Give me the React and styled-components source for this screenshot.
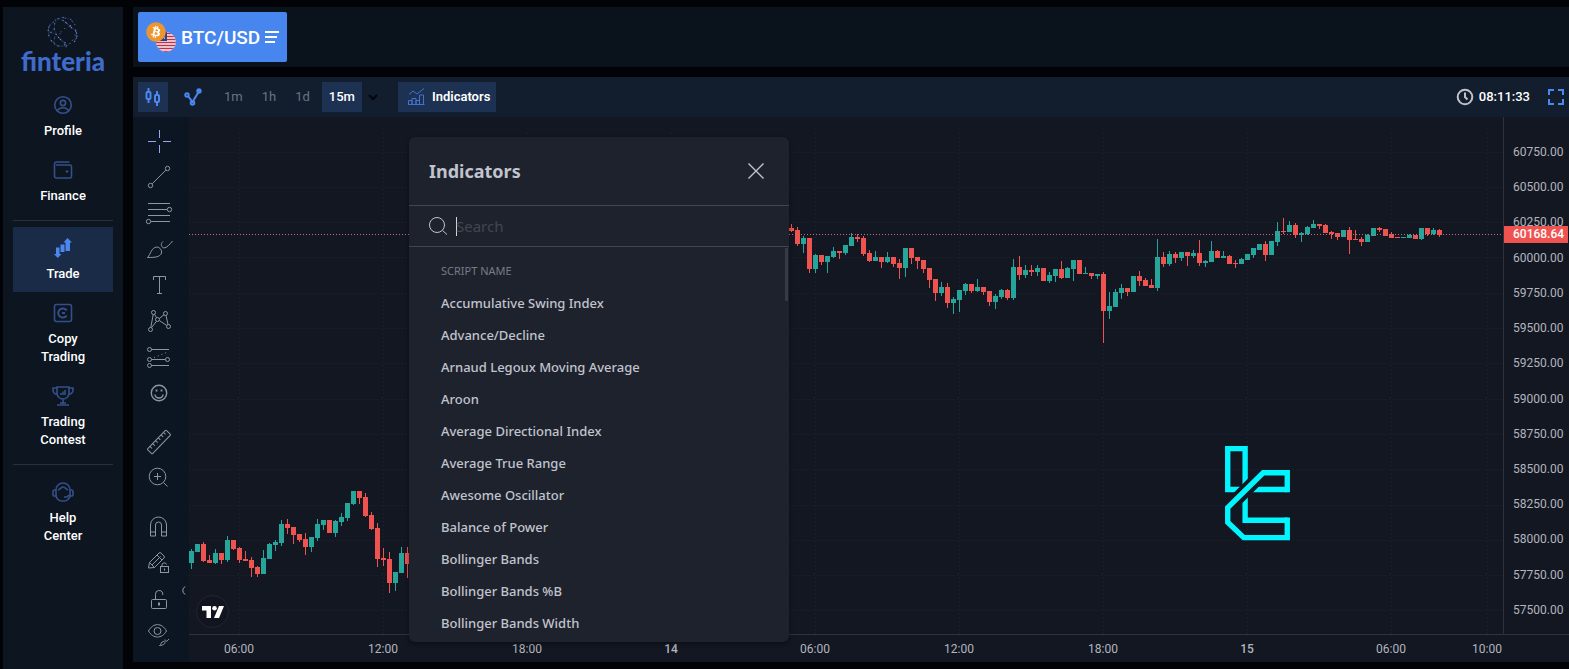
import React, { useState } from "react";
import styled, { createGlobalStyle } from "styled-components";
import { FaBitcoin } from "react-icons/fa";

const UP = "#26a69a";
const DOWN = "#ef5350";
const STEP = 6;
const GRID_X = [50, 194, 338, 482, 626, 770, 914, 1058, 1202, 1298];

const indicators = [
  "Accumulative Swing Index",
  "Advance/Decline",
  "Arnaud Legoux Moving Average",
  "Aroon",
  "Average Directional Index",
  "Average True Range",
  "Awesome Oscillator",
  "Balance of Power",
  "Bollinger Bands",
  "Bollinger Bands %B",
  "Bollinger Bands Width",
];

const prices = [
  "60750.00",
  "60500.00",
  "60250.00",
  "60000.00",
  "59750.00",
  "59500.00",
  "59250.00",
  "59000.00",
  "58750.00",
  "58500.00",
  "58250.00",
  "58000.00",
  "57750.00",
  "57500.00",
];

const times = [
  { label: "06:00" },
  { label: "12:00" },
  { label: "18:00" },
  { label: "14", day: true },
  { label: "06:00" },
  { label: "12:00" },
  { label: "18:00" },
  { label: "15", day: true },
  { label: "06:00" },
  { label: "10:00", near: true },
];

// direction, body top, body bottom, wick top, wick bottom
const morning = `u 434 446 432 452,u 427 435 427 435,d 427 444 425 445,d 443 446 438 446,u 436 446 432 447,
d 436 443 436 447,u 423 443 419 445,d 423 432 423 433,d 431 443 430 446,d 442 444 434 444,d 443 451 440 460,
d 450 457 449 460,u 441 457 433 457,u 427 442 426 442,u 425 428 423 434,u 407 426 403 429,d 407 411 402 417,
d 410 418 410 427,d 417 423 417 425,d 422 430 416 438,u 420 430 420 435,u 407 421 402 424,u 403 408 403 413,
d 403 416 403 416,u 404 416 403 420,u 400 405 396 409,u 386 401 386 404,u 374 387 374 388,d 374 381 374 387,
d 380 399 376 400,d 398 412 395 413,d 411 442 406 450,d 441 443 431 449,d 442 466 435 476,u 455 466 455 474,
u 436 456 430 456,d 436 447 430 461`;

const recent = `d 111 114 107 115,d 113 127 110 129,u 121 127 119 136,d 121 152 121 156,u 138 152 137 156,
d 138 145 138 148,u 139 145 139 156,u 134 140 130 141,d 134 136 134 142,u 128 136 128 138,u 120 129 116 129,
d 120 122 117 125,d 121 137 119 139,d 136 144 133 145,u 140 144 134 144,d 140 145 140 151,u 140 145 135 146,
d 140 147 140 150,d 146 151 142 162,u 131 151 131 160,d 131 141 131 147,d 140 144 140 152,d 143 152 143 156,
d 151 163 151 171,d 162 176 162 184,u 170 176 165 179,d 170 186 166 191,u 182 186 180 197,u 173 183 173 195,
u 167 174 166 178,d 167 174 167 176,u 170 174 162 175,d 170 175 170 178,d 174 185 174 189,u 179 185 177 192,
u 173 180 172 182,d 173 181 172 183,u 150 181 142 183,d 150 158 139 163,u 153 158 148 161,d 153 155 148 159,
u 151 155 148 159,d 151 164 151 164,u 158 164 155 166,u 152 159 152 165,d 152 161 144 162,u 151 161 150 161,
u 143 152 143 164,d 143 157 143 157,u 156 157 150 157,d 156 159 156 162,u 157 159 157 162,d 157 194 155 226,
u 189 194 175 202,u 175 190 172 190,u 171 176 167 182,d 171 175 171 179,u 159 175 159 175,d 159 164 154 169,
d 163 169 161 169,d 168 171 162 171,u 140 171 122 174,d 140 147 135 150,u 137 147 134 149,d 137 141 135 146,
u 135 141 135 144,d 135 139 135 149,u 136 139 133 141,d 136 146 123 149,u 144 146 143 150,u 134 145 124 145,
d 134 141 133 141,u 139 141 134 141,d 139 147 138 147,d 146 147 143 151,u 142 147 141 147,u 137 143 137 143,
u 131 138 131 141,u 127 133 127 133,d 127 138 124 144,u 124 138 124 138,u 114 125 105 129,d 114 115 101 117,
u 108 115 104 115,d 108 118 106 121,u 116 118 115 125,u 110 117 109 118,u 107 111 103 111,d 107 109 107 112,
d 108 116 107 116,d 115 117 114 122,d 116 120 116 123,u 113 120 113 120,d 113 123 110 137,d 122 123 113 123,
d 122 125 120 129,u 118 125 117 125,u 111 119 111 119,d 111 113 110 115,d 112 119 112 119,d 117 121 115 121,
d 120 121 120 121,u 120 121 120 121,u 118 121 117 121,d 118 122 118 122,u 111 122 111 123,d 111 117 111 119,
u 113 117 111 118,d 113 118 112 120`;

const parse = (text, start) =>
  text.split(",").map((row, i) => {
    const [dir, top, bottom, high, low] = row.trim().split(" ");
    return {
      x: (start + i) * STEP,
      color: dir === "u" ? UP : DOWN,
      top: +top,
      bottom: +bottom,
      high: +high,
      low: +low,
    };
  });

const candles = [...parse(morning, 0), ...parse(recent, 100)];

// points spread over a ball, joined to their close neighbours
const globePoints = Array.from({ length: 46 }, (_, i) => {
  const z = 1 - (2 * i + 1) / 46;
  const r = Math.sqrt(1 - z * z);
  const a = i * 2.4 + Math.sin(i * 7) * 0.5;
  return [16 + 15 * r * Math.cos(a), 16 + 15 * z, r * Math.sin(a)];
});

const globeLines = [];
globePoints.forEach((p, i) => {
  globePoints.slice(i + 1).forEach((q) => {
    const d = Math.hypot(p[0] - q[0], p[1] - q[1], (p[2] - q[2]) * 15);
    if (d < 9 && (p[2] > -0.3 || q[2] > -0.3)) globeLines.push([p, q]);
  });
});

const navIcons = {
  profile: (
    <>
      <circle cx="10" cy="10" r="8.3" />
      <circle cx="10" cy="8" r="2.6" />
      <path d="M4.500 16c1-2.300 3-3.200 5.500-3.200s4.500.9 5.500 3.200" />
    </>
  ),
  finance: (
    <>
      <path d="M16.500 2H3.500A2 2 0 0 0 1.500 4v12a2 2 0 0 0 2 2h13.500a1.500 1.500 0 0 0 1.500-1.500V6.500A1.500 1.500 0 0 0 17 5H3" />
      <path d="M12.500 11.500h3M14 10v3" strokeWidth="1" />
    </>
  ),
  trade: (
    <g fill="currentColor" stroke="none">
      <path d="M3 9.500h3.500V16H8.500L4.800 20 1 16h2z" />
      <path d="M7.500 6.500h4V14h-4z" />
      <path d="M12.500 13V4.500h-2L14.500 0l4.500 4.500h-2V13z" />
    </g>
  ),
  copy: (
    <>
      <rect x="1.500" y="1.500" width="17" height="17" rx="2" />
      <path d="M13.700 7.500A4.600 4.600 0 1 0 13.700 12.500" strokeWidth="2" />
      <path d="M9 10h3" strokeWidth="2" />
    </>
  ),
  contest: (
    <>
      <path d="M4 1h12v6a6 6 0 0 1-12 0zM4 2H0v2a4 4 0 0 0 5 4M16 2h4v2a4 4 0 0 1-5 4M10 13v5M4 19h12M7 17h6" />
      <path d="M8 9V7M10 9V5.500M12 9V4" />
    </>
  ),
  help: (
    <>
      <path d="M3 8a7 7 0 0 1 14 0v5a6 6 0 0 1-6 6H9a6 6 0 0 1-6-6z" />
      <path d="M5 8c3-1 3-3 5-3s3 2 5 3" />
      <path d="M3 8H1.500A1.500 1.500 0 0 0 0 9.500v3A1.500 1.500 0 0 0 1.500 14H3M17 8h1.500A1.500 1.500 0 0 1 20 9.500v3a1.500 1.500 0 0 1-1.500 1.500H17M11 15h3l2-2" />
    </>
  ),
};

const nav = [
  [
    { icon: "profile", label: "Profile" },
    { icon: "finance", label: "Finance" },
  ],
  [
    { icon: "trade", label: "Trade" },
    { icon: "copy", label: "Copy Trading" },
    { icon: "contest", label: "Trading Contest" },
  ],
  [{ icon: "help", label: "Help Center" }],
];

const tools = [
  [
    {
      name: "Cross",
      active: true,
      icon: <path d="M14.500 2v8M14.500 17v8M3 13.500h8M18 13.500h8" />,
    },
    {
      name: "Trend line",
      icon: (
        <>
          <circle cx="5.500" cy="21.500" r="2.200" />
          <circle cx="22.500" cy="4.500" r="2.200" />
          <path d="M7.200 19.800L20.800 6.200" />
        </>
      ),
    },
    {
      name: "Fib retracement",
      icon: (
        <>
          <path d="M3 3.500h22M3 9.500h19M3 15.500h22M6 21.500h19" />
          <circle cx="24.500" cy="9.500" r="2.200" />
          <circle cx="3.500" cy="21.500" r="2.200" />
        </>
      ),
    },
    {
      name: "Brush",
      icon: (
        <>
          <path d="M2.500 21.500C6 18 6 12 11.500 11a5 5 0 0 1 5 6c-1.500 4-6 4.500-14 4.500z" />
          <path d="M18 5.500c-3 2.500-1.500 6 1 6.500 3.500-.5 6-4 8.500-7" />
        </>
      ),
    },
    {
      name: "Text",
      icon: <path d="M8.500 8V4.500h12V8M14.500 4.500v17M12 21.500h5" />,
    },
    {
      name: "Patterns",
      icon: (
        <>
          <circle cx="8.500" cy="4.500" r="2" />
          <circle cx="20.500" cy="5.500" r="2" />
          <circle cx="12.500" cy="11.500" r="2" />
          <circle cx="5.500" cy="21.500" r="2" />
          <circle cx="23.500" cy="18.500" r="2" />
          <path d="M8.200 6.500l-2.400 13M9.500 6.200l2 3.500M6.500 19.700l5-6.500M14.300 10.500l4.700-3.700M14.300 12.500l7.500 5M21 7.500l2 9" />
        </>
      ),
    },
    {
      name: "Prediction",
      icon: (
        <>
          <circle cx="4.500" cy="5.500" r="2" />
          <circle cx="4.500" cy="15.500" r="2" />
          <circle cx="22.500" cy="15.500" r="2" />
          <circle cx="4.500" cy="21.500" r="2" />
          <path d="M6.500 5.500H24M6.500 15.500h14M6.500 21.500H24" />
          <path d="M9 13.500l14-5.500" strokeDasharray="1 3" />
        </>
      ),
    },
    {
      name: "Icons",
      icon: (
        <>
          <circle cx="14" cy="13" r="7.700" strokeWidth="1.400" />
          <path d="M10 14.500a4 3.500 0 0 0 8 0" strokeWidth="1.400" />
          <path d="M11.500 9.500v2M16.500 9.500v2" strokeWidth="1.800" />
        </>
      ),
    },
  ],
  [
    {
      name: "Measure",
      icon: (
        <g transform="rotate(-46 14 14)">
          <rect x="0.500" y="10.500" width="27" height="7" rx="1" />
          <path d="M4.500 10.500v3M8.500 10.500v3M12.500 10.500v3M16.500 10.500v3M20.500 10.500v3M24 10.500v3" />
        </g>
      ),
    },
    {
      name: "Zoom in",
      icon: (
        <>
          <circle cx="12.500" cy="12.500" r="8.300" />
          <path d="M18.500 18.500l4 4M12.500 9v7M9 12.500h7" />
        </>
      ),
    },
  ],
  [
    {
      name: "Magnet",
      icon: (
        <path d="M5.500 24V13a8 8 0 0 1 16 0v11h-5V13a3 3 0 0 0-6 0v11zM5.500 20h5M16.500 20h5" />
      ),
    },
    {
      name: "Stay in drawing mode",
      icon: (
        <>
          <path d="M3.500 20l1-5.500L14 5a1.500 1.500 0 0 1 2 0l3 3a1.500 1.500 0 0 1 0 2l-9.500 9.500zM4.500 14.500l5 5M12 7l5 5M7 17l8.500-8.500" />
          <rect x="15.500" y="18.500" width="8" height="6" />
          <path d="M17 18.500V17a2.300 2.300 0 0 1 4.500-.5M19.500 20.500v2" />
        </>
      ),
    },
    {
      name: "Lock all drawings",
      icon: (
        <>
          <rect x="6.500" y="15.500" width="15" height="9" rx="1" />
          <path d="M10.500 15.500V10.500a3.700 3.700 0 0 1 7.200-1.500V11" />
          <path d="M14 18.500v3" strokeWidth="2" />
        </>
      ),
    },
    {
      name: "Hide all drawings",
      icon: (
        <>
          <path d="M3.500 11C8 2.500 17 2.500 21.500 11 17 19 8 19 3.500 11z" />
          <circle cx="12.500" cy="11" r="3.500" />
          <path d="M14.500 25.500c2-1 1.500-4 4-4 3 .5 1 4-4 4zM20 19.500c-.5 2.500 2 2.500 4-.5" />
        </>
      ),
    },
  ],
];

function Logo() {
  return (
    <LogoLink href="#" aria-label="finteria">
      <svg width="32" height="32" viewBox="0 0 32 32" aria-hidden="true">
        <g stroke="#3d59a0" strokeWidth="0.400" opacity="0.700">
          {globeLines.map(([p, q], i) => (
            <line key={i} x1={p[0]} y1={p[1]} x2={q[0]} y2={q[1]} />
          ))}
        </g>
        {globePoints.map((p, i) => (
          <circle key={i} cx={p[0]} cy={p[1]} r={p[2] > 0 ? 0.7 : 0.5} fill="#6d86c8" />
        ))}
      </svg>
      <Wordmark>finteria</Wordmark>
    </LogoLink>
  );
}

function PairIcon() {
  return (
    <svg width="30" height="30" viewBox="0 0 30 30" aria-hidden="true">
      <defs>
        <clipPath id="flag">
          <circle cx="20" cy="20" r="10" />
        </clipPath>
      </defs>
      <g clipPath="url(#flag)">
        <rect x="10" y="10" width="20" height="20" fill="#f3f3f6" />
        <path
          d="M10 11.500h20M10 14.500h20M10 17.500h20M10 20.500h20M10 23.500h20M10 26.500h20M10 29.500h20"
          stroke="#c4304c"
          strokeWidth="1.500"
        />
        <rect x="10" y="10" width="11" height="9" fill="#33427e" />
        <path d="M12 13h9M12 16h9" stroke="#ffffff" strokeDasharray="1 2" />
      </g>
      <circle cx="10" cy="10" r="9" fill="#ffffff" />
      <FaBitcoin x="0" y="0" size={20} color="#ee962e" />
    </svg>
  );
}

function Sidebar() {
  return (
    <SidebarBox>
      <Logo />
      {nav.map((group, i) => (
        <NavGroup key={i}>
          {group.map(({ icon, label }) => (
            <NavItem key={label} href="#" $active={label === "Trade"}>
              <svg width="18" height="18" viewBox="1 1 18 18" aria-hidden="true">
                {navIcons[icon]}
              </svg>
              <NavLabel>{label}</NavLabel>
            </NavItem>
          ))}
        </NavGroup>
      ))}
    </SidebarBox>
  );
}

function Toolbar() {
  const [frame, setFrame] = useState("15m");

  return (
    <ToolbarBox>
      <SquareButton aria-label="Candles" $active>
        <svg width="16" height="18" viewBox="0 0 16 18">
          <path d="M3.500 0v4M3.500 11v4M12 3v4M12 14v4" />
          <rect x="1.500" y="4" width="4" height="7" rx="1" />
          <rect x="10" y="7" width="4" height="7" rx="1" />
        </svg>
      </SquareButton>
      <SquareButton aria-label="Line">
        <svg width="18" height="18" viewBox="0 0 18 18">
          <path d="M4 8l4.500 6L14.500 4" />
          <circle cx="3" cy="7" r="1.700" />
          <circle cx="8.500" cy="15" r="1.800" />
          <circle cx="15" cy="3" r="1.700" fill="currentColor" />
        </svg>
      </SquareButton>
      <Frames>
        {["1m", "1h", "1d", "15m"].map((item) => (
          <FrameButton key={item} $active={item === frame} onClick={() => setFrame(item)}>
            {item}
          </FrameButton>
        ))}
      </Frames>
      <MoreButton aria-label="More intervals">
        <svg width="10" height="8" viewBox="0 0 10 8">
          <path d="M1 2l4 4 4-4" />
        </svg>
      </MoreButton>
      <IndicatorsButton>
        <svg width="17" height="17" viewBox="0 0 17 17" aria-hidden="true">
          <path d="M.5 16.500v-4h3.500v4zM4 16.500v-6h4v6M8 16.500v-4h3.500v4M11.500 16.500V7H15.500v9.500zM.5 16.500h16" />
          <path d="M1 6.500l4-3.500 4 3 7-5.500" />
        </svg>
        Indicators
      </IndicatorsButton>
      <Clock>
        <svg width="18" height="18" viewBox="0 0 18 18" aria-hidden="true">
          <circle cx="9" cy="9" r="7.300" />
          <path d="M9 4.500V9l2.500 2.500" />
        </svg>
        08:11:33
      </Clock>
      <FullscreenButton aria-label="Fullscreen">
        <svg width="16" height="16" viewBox="0 0 16 16">
          <path d="M1 6V1h5M10 1h5v5M15 10v5h-5M6 15H1v-5" />
        </svg>
      </FullscreenButton>
    </ToolbarBox>
  );
}

function DrawingTools() {
  return (
    <ToolsColumn>
      {tools.map((group, i) => (
        <ToolGroup key={i}>
          {group.map(({ name, icon, active }) => (
            <ToolButton key={name} aria-label={name} $active={active}>
              <svg width="28" height="28" viewBox="0 0 28 28">
                {icon}
              </svg>
            </ToolButton>
          ))}
        </ToolGroup>
      ))}
      <CollapseButton aria-label="Hide drawing tools">
        <svg width="5" height="9" viewBox="0 0 5 9">
          <path d="M4 .5Q-.5 4.500 4 8.500" />
        </svg>
      </CollapseButton>
    </ToolsColumn>
  );
}

function Chart() {
  return (
    <Plot>
      <PlotSvg role="img" aria-label="BTC/USD 15 minute candles">
        <g stroke="#1f2632" strokeDasharray="1 3">
          {GRID_X.map((x) => (
            <line key={x} x1={x + 0.5} y1="16" x2={x + 0.5} y2="100%" />
          ))}
          {prices.map((price, i) => {
            const y = Math.round(34.5 + i * 35.3) + 0.5;
            return <line key={price} x1="0" y1={y} x2="100%" y2={y} />;
          })}
        </g>
        {candles.map((c) => (
          <g key={c.x} fill={c.color}>
            <rect x={c.x + 2} y={c.high} width="1" height={c.low - c.high} />
            <rect x={c.x} y={c.top} width="5" height={c.bottom - c.top} />
          </g>
        ))}
        <line x1="0" y1="117.500" x2="100%" y2="117.500" stroke="#c76a80" strokeDasharray="1 2" />
      </PlotSvg>
      <Watermark viewBox="76 48 194 284" aria-hidden="true">
        <g fill="none" stroke="#00f6ff" strokeWidth="16">
          <path d="M136 178H84V56h52v122" />
          <path d="M262 178H136v92h126" />
          <path d="M100 218L176 142" stroke="#131722" strokeWidth="40" />
          <path d="M262 186v-58h-72L84 232v44l48 46h130v-60" />
        </g>
      </Watermark>
      <ProviderBadge href="#" aria-label="TradingView">
        <svg width="22" height="12" viewBox="0 0 22 12" fill="#ffffff">
          <path d="M0 0h9v12H4.500V4.500H0z" />
          <circle cx="12.500" cy="2.300" r="2.300" />
          <path d="M17 0h5l-5 12h-5z" />
        </svg>
      </ProviderBadge>
    </Plot>
  );
}

function IndicatorsDialog() {
  const [query, setQuery] = useState("");
  const shown = indicators.filter((name) =>
    name.toLowerCase().includes(query.toLowerCase())
  );

  return (
    <Dialog role="dialog" aria-labelledby="indicators-title">
      <DialogHeader>
        <DialogTitle id="indicators-title">Indicators</DialogTitle>
        <CloseButton aria-label="Close">
          <svg width="16" height="16" viewBox="0 0 16 16">
            <path d="M.5.5l15 15M15.500.5l-15 15" />
          </svg>
        </CloseButton>
      </DialogHeader>
      <SearchRow>
        <svg width="20" height="20" viewBox="0 0 20 20" aria-hidden="true">
          <circle cx="9" cy="9" r="7.500" />
          <path d="M14.500 14.500l4.500 4" />
        </svg>
        {!query && <Caret />}
        <SearchInput
          type="text"
          placeholder="Search"
          aria-label="Search"
          value={query}
          onChange={(e) => setQuery(e.target.value)}
        />
      </SearchRow>
      <ScriptList>
        <ListHeading>SCRIPT NAME</ListHeading>
        {shown.map((name) => (
          <ScriptButton key={name}>{name}</ScriptButton>
        ))}
        <ScrollThumb />
      </ScriptList>
    </Dialog>
  );
}

function App() {
  return (
    <Page>
      <GlobalStyle />
      <Sidebar />
      <Main>
        <Header>
          <PairButton>
            <PairIcon />
            BTC/USD
            <svg width="14" height="14" viewBox="0 0 14 14" aria-hidden="true">
              <path d="M0 2h14M0 7h12M0 12h10" stroke="#ffffff" strokeWidth="2" />
            </svg>
          </PairButton>
        </Header>
        <Terminal>
          <Toolbar />
          <Workspace>
            <DrawingTools />
            <ChartArea>
              <ChartRow>
                <Chart />
                <PriceAxis>
                  {prices.map((price) => (
                    <span key={price}>{price}</span>
                  ))}
                  <PriceTag>60168.64</PriceTag>
                </PriceAxis>
              </ChartRow>
              <TimeAxis>
                {times.map(({ label, day, near }, i) => (
                  <TimeTick key={i} $day={day} $near={near}>
                    {label}
                  </TimeTick>
                ))}
              </TimeAxis>
            </ChartArea>
            <IndicatorsDialog />
          </Workspace>
        </Terminal>
      </Main>
    </Page>
  );
}

export default App;

const GlobalStyle = createGlobalStyle`
  * {
    box-sizing: border-box;
  }

  body {
    margin: 0;
    background: #010307;
    color: #ffffff;
    font-family: Roboto, "Liberation Sans", sans-serif;
    overflow: hidden;
  }

  button {
    border: none;
    padding: 0;
    background: transparent;
    color: inherit;
    font-family: inherit;
    cursor: pointer;
  }

  a {
    color: inherit;
    text-decoration: none;
  }
`;

const Page = styled.div`
  display: flex;
  gap: 10px;
  height: 100vh;
  padding: 7px 0 0 3px;
`;

const SidebarBox = styled.nav`
  flex: 0 0 120px;
  padding: 0 10px;
  background: #0c1520;
  overflow: hidden;
`;

const LogoLink = styled.a`
  display: flex;
  flex-direction: column;
  align-items: center;
  height: 77px;
  padding-top: 9px;
`;

const Wordmark = styled.span`
  color: #3f6bcb;
  font-family: Lato, sans-serif;
  font-size: 26px;
  font-weight: 900;
  line-height: 26px;
`;

const NavGroup = styled.div`
  & + & {
    margin-top: 6px;
    padding-top: 6px;
    border-top: 1px solid #27313d;
  }
`;

const NavItem = styled.a`
  display: flex;
  flex-direction: column;
  align-items: center;
  gap: 8px;
  padding: 12px 20px 9px;
  background: ${({ $active }) => ($active ? "#1a2b47" : "transparent")};
  color: ${({ $active }) => ($active ? "#4a87ee" : "#34508a")};

  svg {
    overflow: visible;
    fill: none;
    stroke: currentColor;
    stroke-width: 1.6;
  }
`;

const NavLabel = styled.span`
  color: #ffffff;
  font-size: 13px;
  font-weight: 500;
  line-height: 18px;
  text-align: center;
`;

const Main = styled.main`
  flex: 1;
  min-width: 0;
  display: flex;
  flex-direction: column;
  gap: 10px;
  padding-bottom: 7px;
`;

const Header = styled.header`
  display: flex;
  padding: 5px;
  background: #0a121c;
`;

const PairButton = styled.button`
  display: flex;
  align-items: center;
  gap: 5px;
  height: 50px;
  padding: 0 8px;
  border-radius: 2px;
  background: #4786ee;
  font-size: 19px;
  font-weight: 500;
`;

const Terminal = styled.section`
  flex: 1;
  min-height: 0;
  display: flex;
  flex-direction: column;
  background: #131722;
`;

const ToolbarBox = styled.div`
  display: flex;
  align-items: center;
  height: 40px;
  padding: 5px;
  background: #121d2e;

  svg {
    fill: none;
    stroke: currentColor;
  }
`;

const SquareButton = styled.button`
  display: flex;
  align-items: center;
  justify-content: center;
  width: 30px;
  height: 30px;
  background: ${({ $active }) => ($active ? "#1d3152" : "transparent")};
  color: #4a87ee;

  & + & {
    margin-left: 10px;
  }

  svg {
    stroke-width: 2;
  }
`;

const Frames = styled.div`
  display: flex;
  gap: 5px;
  margin-left: 9px;
`;

const FrameButton = styled.button`
  height: 30px;
  padding: 0 7px 2px;
  background: ${({ $active }) => ($active ? "#1d3152" : "transparent")};
  color: ${({ $active }) => ($active ? "#ffffff" : "#6b7380")};
  font-size: 13px;
  font-weight: ${({ $active }) => ($active ? 500 : 400)};
`;

const MoreButton = styled.button`
  display: flex;
  margin: 0 20px 0 6px;
  color: #03060b;

  svg {
    stroke-width: 2;
  }
`;

const IndicatorsButton = styled.button`
  display: flex;
  align-items: center;
  gap: 7px;
  height: 30px;
  padding: 0 6px 1px 10px;
  background: #1d3152;
  font-size: 13px;
  font-weight: 600;

  svg {
    color: #4373cc;
  }
`;

const Clock = styled.div`
  display: flex;
  align-items: center;
  gap: 5px;
  margin-left: auto;
  padding-bottom: 1px;
  font-size: 13px;
  font-weight: 500;

  svg {
    color: #bfc3c8;
    stroke-width: 2;
  }
`;

const FullscreenButton = styled.button`
  display: flex;
  margin-left: 18px;
  color: #4a87ee;

  svg {
    stroke-width: 2;
  }
`;

const Workspace = styled.div`
  position: relative;
  flex: 1;
  min-height: 0;
  display: flex;
`;

const ToolsColumn = styled.div`
  position: relative;
  flex: 0 0 56px;
  display: flex;
  flex-direction: column;
  gap: 12px;
  padding: 7px 4px 0 0;
  background: #0c1622;
  overflow: hidden;

  svg {
    overflow: visible;
    fill: none;
    stroke: currentColor;
  }
`;

const ToolGroup = styled.div`
  display: flex;
  flex-direction: column;
`;

const ToolButton = styled.button`
  display: flex;
  align-items: center;
  justify-content: center;
  height: 36px;
  color: ${({ $active }) => ($active ? "#94aaf0" : "#8e96a3")};
`;

const CollapseButton = styled.button`
  position: absolute;
  right: 3px;
  bottom: 67px;
  display: flex;
  color: #a3a9b5;
`;

const ChartArea = styled.div`
  flex: 1;
  min-width: 0;
  display: flex;
  flex-direction: column;
`;

const ChartRow = styled.div`
  flex: 1;
  min-height: 0;
  display: flex;
  border-bottom: 1px solid #2d323e;
`;

const Plot = styled.div`
  position: relative;
  flex: 1;
  min-width: 0;
  overflow: hidden;
`;

const PlotSvg = styled.svg`
  display: block;
  width: 100%;
  height: 100%;
`;

const Watermark = styled.svg`
  position: absolute;
  top: 329px;
  right: 213px;
  width: 65px;
  height: 95px;
`;

const ProviderBadge = styled.a`
  position: absolute;
  left: 7px;
  bottom: 6px;
  display: flex;
  align-items: center;
  justify-content: center;
  width: 33px;
  height: 33px;
  border: 1px solid #222631;
  border-radius: 50%;
  background: #12151f;
`;

const PriceAxis = styled.div`
  position: relative;
  flex: 0 0 66px;
  display: flex;
  flex-direction: column;
  justify-content: space-between;
  padding: 27px 0 16px 9px;
  border-left: 1px solid #2d323e;
  color: #b2b5be;
  font-size: 12px;
  line-height: 16px;
`;

const PriceTag = styled.strong`
  position: absolute;
  top: 109px;
  left: 0;
  right: 1px;
  padding-left: 9px;
  background: #ef5350;
  color: #ffffff;
  font-weight: 500;
  line-height: 17px;
`;

const TimeAxis = styled.div`
  display: flex;
  align-items: center;
  gap: 96px;
  height: 27px;
  padding-left: 26px;
  overflow: hidden;
`;

const TimeTick = styled.span`
  flex: 0 0 48px;
  margin-left: ${({ $near }) => ($near ? "-48px" : "0")};
  color: #b2b5be;
  font-size: 12px;
  font-weight: ${({ $day }) => ($day ? 500 : 400)};
  text-align: center;
`;

const Dialog = styled.section`
  position: absolute;
  top: 20px;
  bottom: 20px;
  left: 276px;
  display: flex;
  flex-direction: column;
  width: 380px;
  border-radius: 6px;
  background: #1e222d;
  box-shadow: 0 2px 4px rgba(0, 0, 0, 0.4);
  color: #c1c4cd;
  font-family: "Noto Sans", "Open Sans", sans-serif;
  overflow: hidden;

  svg {
    fill: none;
    stroke: currentColor;
  }
`;

const DialogHeader = styled.div`
  display: flex;
  align-items: center;
  justify-content: space-between;
  padding: 20px 25px 20px 20px;
  border-bottom: 1px solid #434651;
`;

const DialogTitle = styled.h2`
  margin: 0;
  font-size: 18px;
  font-weight: 700;
  line-height: 28px;
`;

const CloseButton = styled.button`
  display: flex;

  svg {
    stroke-width: 1.4;
  }
`;

const SearchRow = styled.label`
  display: flex;
  align-items: center;
  height: 41px;
  padding: 0 19px;
  border-bottom: 1px solid #434651;
`;

const Caret = styled.span`
  width: 1px;
  height: 19px;
  margin: 0 -9px 0 8px;
  background: #d1d4dc;
`;

const SearchInput = styled.input`
  flex: 1;
  min-width: 0;
  margin-left: 8px;
  padding: 0;
  border: none;
  outline: none;
  background: transparent;
  color: #d1d4dc;
  font-family: inherit;
  font-size: 15px;

  &::placeholder {
    color: #434651;
    opacity: 1;
  }
`;

const ScriptList = styled.div`
  position: relative;
  flex: 1;
  min-height: 0;
  display: flex;
  flex-direction: column;
  padding-top: 8px;
  overflow: hidden;
`;

const ListHeading = styled.h3`
  margin: 0;
  padding: 0 32px;
  color: #787b86;
  font-size: 11px;
  font-weight: 400;
  line-height: 32px;
`;

const ScriptButton = styled.button`
  flex: none;
  height: 32px;
  padding: 0 32px;
  font-size: 13px;
  font-weight: 500;
  text-align: left;
`;

const ScrollThumb = styled.div`
  position: absolute;
  top: 1px;
  right: 1px;
  width: 3px;
  height: 53px;
  background: #363a45;
`;
